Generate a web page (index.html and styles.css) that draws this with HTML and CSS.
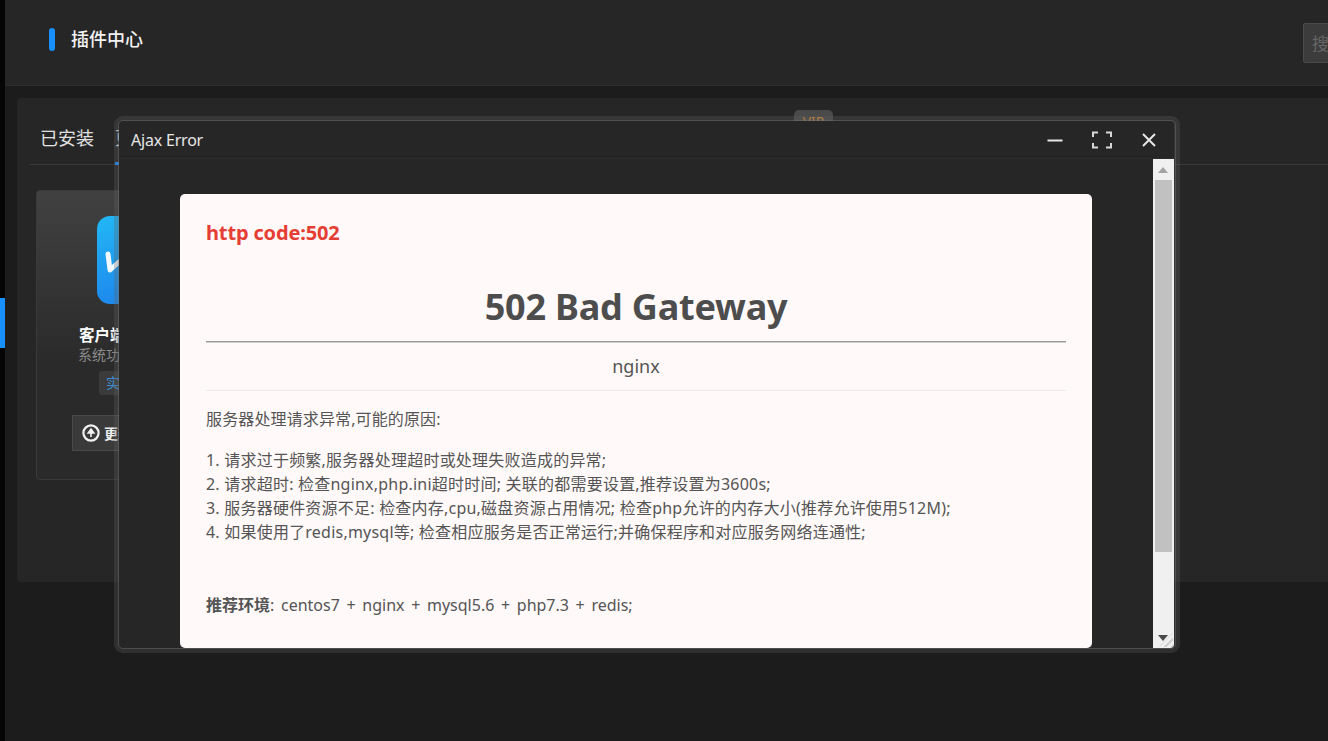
FILE: index.html
```html
<!DOCTYPE html>
<html lang="zh-CN">
<head>
    <meta charset="UTF-8">
    <meta name="viewport" content="width=device-width, initial-scale=1.0">
    <title>插件中心</title>
    <link rel="stylesheet" href="styles.css">
</head>
<body>

    <div class="sidebar">
        <div class="sidebar-active"></div>
    </div>

    <div class="main">
        <div class="header">
            <span class="header-mark"></span>
            <h1 class="header-title">插件中心</h1>
            <div class="search-box">搜</div>
        </div>

        <div class="panel">
            <div class="tabs">
                <div class="tab">已安装</div>
                <div class="tab tab-active">更新</div>
                <div class="tab-vip">VIP</div>
            </div>

            <div class="card-list">
                <div class="card">
                    <div class="card-icon">
                        <svg viewBox="0 0 88 88" width="88" height="88">
                            <path d="M11 38 L13 54 L23 45 L27 54 L38 38" fill="none" stroke="#f2f8ff" stroke-width="5" stroke-linecap="round" stroke-linejoin="round"/>
                        </svg>
                    </div>
                    <div class="card-title">客户端应用管理器</div>
                    <div class="card-sub">系统功能扩展管理器</div>
                    <div class="card-tag">实用工具类</div>
                    <div class="card-btn">
                        <svg viewBox="0 0 18 18" width="18" height="18">
                            <circle cx="9" cy="9" r="7.6" fill="none" stroke="#f2f2f2" stroke-width="2.2"/>
                            <path d="M9 13 V7.5 M6.2 9 L9 5.2 L11.8 9 Z" fill="#f2f2f2" stroke="#f2f2f2" stroke-width="1.6"/>
                        </svg>
                        <span>更新插件</span>
                    </div>
                </div>
            </div>
        </div>
    </div>

    <div class="dialog">
        <div class="dialog-head">
            <span class="dialog-title">Ajax Error</span>
            <div class="dialog-tools">
                <svg viewBox="0 0 16 16" width="16" height="16">
                    <path d="M0.5 8.5 H15.5" stroke="#e6e6e6" stroke-width="2" fill="none"/>
                </svg>
                <svg viewBox="0 0 20 18" width="20" height="18">
                    <path d="M1 6 V1.5 H6 M14 1.5 H19 V6 M19 12 V16.5 H14 M6 16.5 H1 V12" stroke="#d8d8d8" stroke-width="2" fill="none"/>
                </svg>
                <svg viewBox="0 0 16 16" width="16" height="16">
                    <path d="M2 2 L14 14 M14 2 L2 14" stroke="#e6e6e6" stroke-width="2" fill="none"/>
                </svg>
            </div>
        </div>
        <div class="dialog-body">
            <div class="dialog-content">
                <div class="error-box">
                    <div class="error-code">http code:502</div>
                    <h2 class="error-title">502 Bad Gateway</h2>
                    <hr class="rule-dark">
                    <div class="error-server">nginx</div>
                    <hr class="rule-light">
                    <p class="error-intro">服务器处理请求异常,可能的原因:</p>
                    <p class="error-list">
                        1. 请求过于频繁,服务器处理超时或处理失败造成的异常;<br>
                        2. 请求超时: 检查nginx,php.ini超时时间; 关联的都需要设置,推荐设置为3600s;<br>
                        3. 服务器硬件资源不足: 检查内存,cpu,磁盘资源占用情况; 检查php允许的内存大小(推荐允许使用512M);<br>
                        4. 如果使用了redis,mysql等; 检查相应服务是否正常运行;并确保程序和对应服务网络连通性;
                    </p>
                    <p class="error-env"><b>推荐环境</b>: centos7 + nginx + mysql5.6 + php7.3 + redis;</p>
                </div>
            </div>
            <div class="scrollbar">
                <div class="scroll-arrow-up"></div>
                <div class="scroll-thumb"></div>
                <div class="scroll-arrow-down"></div>
                <div class="scroll-grip"></div>
            </div>
        </div>
    </div>

</body>
</html>
```

FILE: styles.css
```css
* {
    box-sizing: border-box;
}
html, body {
    height: 100%;
}
body {
    margin: 0;
    display: flex;
    overflow: hidden;
    background-color: #1c1c1c;
    font-family: "Noto Sans", "Noto Sans CJK SC", sans-serif;
    color: #ddd;
}
.sidebar {
    width: 5px;
    flex: none;
    background-color: #050505;
    padding-top: 298px;
}
.sidebar-active {
    height: 50px;
    background-color: #1890ff;
}
.main {
    flex: 1;
    min-width: 0;
}
.header {
    height: 86px;
    display: flex;
    align-items: center;
    padding: 0 0 6px 44px;
    background-color: #262626;
    border-bottom: 1px solid #303030;
}
.header-mark {
    width: 6px;
    height: 23px;
    border-radius: 3px;
    background-color: #1890ff;
}
.header-title {
    margin: 0 0 3px 16px;
    font-size: 18px;
    font-weight: 500;
    color: #f2f2f2;
}
.search-box {
    width: 60px;
    height: 40px;
    margin: 7px -35px 0 auto;
    padding: 8px 0 0 8px;
    font-size: 17px;
    line-height: 24px;
    color: #666;
    background-color: #3c3c3c;
    border: 1px solid #4a4a4a;
    border-radius: 2px;
}
.panel {
    height: 484px;
    margin: 12px 0 0 12px;
    background-color: #262626;
    border-radius: 4px 0 0 4px;
}
.tabs {
    height: 67px;
    margin-left: 13px;
    padding: 20px 0 0 10px;
    display: flex;
    gap: 21px;
    border-bottom: 1px solid #3a3a3a;
}
.tab {
    font-size: 18px;
    line-height: 40px;
    height: 47px;
    color: #e0e0e0;
}
.tab-active {
    border-bottom: 3px solid #1890ff;
}
.tab-vip {
    width: 39px;
    height: 24px;
    margin: -8px 0 0 622px;
    font-size: 14px;
    line-height: 24px;
    text-align: center;
    color: #c98a35;
    background-color: #4a4a4a;
    border-radius: 5px;
}
.card-list {
    padding: 25px 0 0 19px;
}
.card {
    width: 210px;
    height: 290px;
    padding-top: 25px;
    display: flex;
    flex-direction: column;
    align-items: center;
    background-image: linear-gradient(#414141, #2a2a2a 60%);
    border: 1px solid #3a3a3a;
    border-radius: 4px;
}
.card-icon {
    width: 88px;
    height: 88px;
    border-radius: 13px;
    background-image: linear-gradient(160deg, #22b8f5, #1c7bea);
}
.card-icon svg {
    display: block;
}
.card-title {
    margin-top: 20px;
    font-size: 15.5px;
    line-height: 22px;
    font-weight: 700;
    color: #fff;
}
.card-sub {
    font-size: 14px;
    line-height: 18px;
    color: #8c8c8c;
}
.card-tag {
    margin-top: 7px;
    height: 24px;
    padding: 0 7px;
    font-size: 14px;
    line-height: 24px;
    color: #3f8fd0;
    background-color: #3b3b3b;
    border-radius: 3px;
}
.card-btn {
    margin-top: 20px;
    width: 138px;
    height: 36px;
    padding-left: 9px;
    display: flex;
    align-items: center;
    gap: 4px;
    font-size: 14px;
    font-weight: 700;
    color: #eee;
    background-color: #3a3a3a;
    border: 1px solid #4a4a4a;
}
.dialog {
    position: absolute;
    left: 114px;
    top: 116px;
    width: 1066px;
    height: 537px;
    display: flex;
    flex-direction: column;
    background-color: #262626;
    background-clip: padding-box;
    border-style: solid;
    border-color: rgba(96, 96, 96, 0.3);
    border-width: 5px 6px 5px 5px;
    border-radius: 9px;
    outline: 1px solid rgba(120, 120, 120, 0.4);
    outline-offset: -5px;
}
.dialog-head {
    height: 38px;
    flex: none;
    display: flex;
    align-items: center;
    justify-content: space-between;
    padding: 0 17px 0 12px;
    border-bottom: 1px solid #2c2c2c;
}
.dialog-title {
    font-size: 16px;
    letter-spacing: -0.2px;
    color: #e6e6e6;
}
.dialog-tools {
    display: flex;
    align-items: center;
    gap: 29px;
}
.dialog-body {
    flex: 1;
    min-height: 0;
    display: flex;
    overflow: hidden;
    border-radius: 0 0 4px 4px;
}
.dialog-content {
    flex: 1;
    min-width: 0;
    padding: 35px 61px 0;
    overflow: hidden;
}
.error-box {
    height: 100%;
    padding: 21px 26px 0;
    background-color: #fff9f9;
    border-radius: 5px;
    color: #555;
    font-size: 16px;
    line-height: 24px;
}
.error-code {
    font-size: 20px;
    line-height: 36px;
    font-weight: 700;
    letter-spacing: -0.15px;
    color: #e53e35;
}
.error-title {
    margin: 31px 0 9px;
    font-size: 36px;
    line-height: 50px;
    font-weight: 700;
    letter-spacing: -0.2px;
    text-align: center;
    color: #4d4d4d;
}
.rule-dark {
    margin: 0;
    border: none;
    border-top: 1px solid #999;
    border-bottom: 1px solid #ccc;
}
.error-server {
    height: 47px;
    font-size: 18px;
    line-height: 46px;
    text-align: center;
}
.rule-light {
    margin: 0;
    border: none;
    border-top: 1px solid #efeaea;
}
.error-intro {
    margin: 16px 0 0;
    letter-spacing: 0.13px;
}
.error-list {
    margin: 17px 0 0;
    letter-spacing: 0.22px;
}
.error-env {
    margin: 49px 0 0;
    word-spacing: 2.5px;
}
.scrollbar {
    position: relative;
    width: 21px;
    flex: none;
    padding: 21px 2px 0;
    background-color: #f0f0f0;
}
.scroll-thumb {
    height: 372px;
    background-color: #c1c1c1;
}
.scroll-arrow-up {
    position: absolute;
    left: 5px;
    top: 8px;
    border: 5px solid transparent;
    border-top: 0;
    border-bottom: 6px solid #a3a3a3;
}
.scroll-arrow-down {
    position: absolute;
    left: 5px;
    bottom: 7px;
    border: 5px solid transparent;
    border-bottom: 0;
    border-top: 6px solid #4a4a4a;
}
.scroll-grip {
    position: absolute;
    right: 1px;
    bottom: 1px;
    width: 14px;
    height: 14px;
    background-image: repeating-linear-gradient(135deg, transparent 0 3px, #cfcfcf 3px 5px);
    clip-path: polygon(100% 0, 100% 100%, 0 100%);
}
```
